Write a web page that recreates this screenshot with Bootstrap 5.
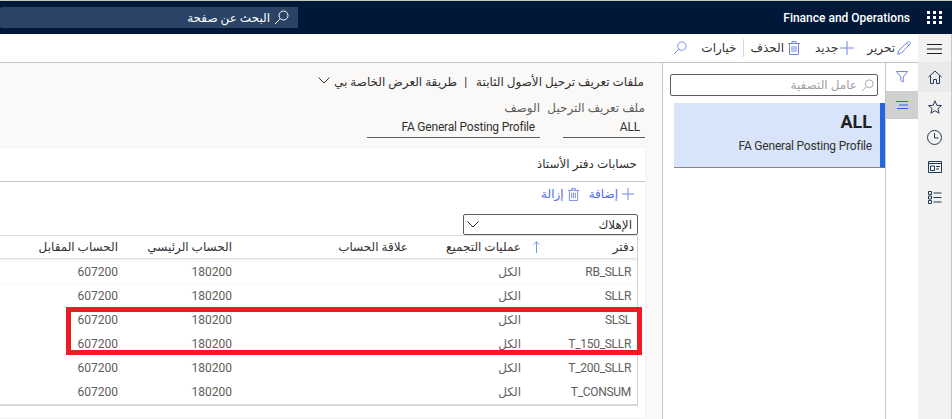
<!DOCTYPE html>
<html lang="ar" dir="rtl">
<head>
    <meta charset="UTF-8">
    <meta name="viewport" content="width=device-width, initial-scale=1.0">
    <title>Finance and Operations</title>
    <link href="https://cdn.jsdelivr.net/npm/bootstrap@5.3.0/dist/css/bootstrap.min.css" rel="stylesheet">
    <style>
        html, body { height: 419px; overflow: hidden; }
        body { font-family: Roboto, "DejaVu Sans", sans-serif; font-size: 12px; color: #323130; background: #faf9f8; }
        svg { display: block; flex: none; fill: none; stroke: currentColor; stroke-width: 1; }
        .top-line { height: 1px; background: #c8c6c4; }
        .top-bar { height: 33px; background: #011839; color: #fff; }
        .apps-btn { width: 34px; }
        .app-title { font-weight: 500; margin-right: 8px; }
        .page-search { width: 298px; height: 21px; background: #2b4367; border-radius: 2px 0 0 2px; margin-right: auto; padding-right: 9px; }
        .shell { height: 385px; }
        .rail { width: 34px; background: #f3f2f1; border-right: 1px solid #c8c6c4; color: #1f3a5c; }
        .rail-btn { height: 30px; }
        .rail-btn.first { height: 28px; padding-top: 2px; color: #201f1e; }
        .rail-btn.active { background: #ebeaea; }
        .content { min-width: 0; }
        .action-bar { height: 29px; background: #fff; border-bottom: 1px solid #c8c3be; padding-right: 7px; color: #323130; }
        .action-item { color: #323130; }
        .ic-blue { color: #6f86e8; }
        .act-edit { margin-left: 13px; gap: 2px; }
        .act-new { margin-left: 15px; gap: 2px; }
        .act-del { margin-left: 6px; }
        .act-sep { width: 1px; height: 18px; background: #dcdad8; margin-left: 7px; }
        .act-opts { margin-left: 14px; }
        .panes { height: 356px; }
        .nav-col { width: 33px; background: #fff; border-left: 1px solid #c8c6c4; }
        .nav-btn { height: 28px; }
        .nav-btn.on { background: #d2d0ce; color: #2266e3; }
        .list-pane { width: 223px; background: #fff; border-left: 1px solid #c8c6c4; padding-top: 11px; }
        .filter-box { height: 22px; margin: 0 7px 7px 7px; border: 1px solid #605e5c; border-radius: 2px; color: #a19f9d; padding-right: 3px; }
        .list-row { height: 65px; margin-left: 11px; margin-right: 0; background: #d8e4fa; border-right: 5px solid #2266e3; border-bottom: 1px solid #8a8886; padding: 7px 8px 0 0; }
        .list-head { font-size: 18px; font-weight: 700; line-height: 24px; color: #201f1e; }
        .list-sub { line-height: 16px; margin-top: 4px; direction: ltr; text-align: right; letter-spacing: -.2px; }
        .form-pane { min-width: 0; padding: 0 17px 0 0; }
        .crumbs { height: 36px; padding: 10px 1px 0 0; color: #323130; }
        .crumb-sep { margin: 0 9px 0 7px; }
        .head-fields { height: 49px; }
        .field-label { line-height: 18px; color: #605e5c; white-space: nowrap; }
        .field-value { border-bottom: 1px solid #605e5c; height: 21px; line-height: 21px; direction: ltr; text-align: right; padding: 0 5px; color: #323130; letter-spacing: -.2px; }
        .f1 { width: 82px; margin-left: 23px; }
        .f2 { width: 173px; }
        .ledger-card { height: 270px; background: #fff; border-radius: 2px 0 0 2px; width: 645px; box-shadow: 0 0 2px rgba(0,0,0,.08); position: relative; }
        .card-title { height: 34px; border-bottom: 1px solid #c8c6c4; padding: 8px 8px 0 0; line-height: 16px; }
        .card-actions { height: 24px; margin-bottom: 8px; padding-right: 11px; color: #4f6bed; }
        .act-add { margin-left: 10px; }
        .asset-select { width: 175px; height: 21px; margin-right: 7px; border: 1px solid #605e5c; border-radius: 2px; padding: 0 5px 0 3px; }
        .grid-wrap { width: 638px; margin-right: 7px; border-right: 1px solid #d2d0ce; border-bottom: 2px solid #dcdad8; border-top: 1px solid #e1dfdd; }
        .grid-wrap .table { margin: 0; table-layout: fixed; font-size: 12px; --bs-table-bg: transparent; --bs-table-color: #605e5c; }
        .grid-wrap th { height: 22px; padding: 0 5px 0 0; font-weight: 400; color: #323130; border-bottom: 1px solid #e1dfdd; vertical-align: middle; }
        .grid-wrap td { height: 24px; padding: 0 5px 0 0; vertical-align: middle; line-height: 16px; }
        .grid-wrap tbody tr:first-child td { height: 26px; padding-top: 2px; background-image: linear-gradient(#ebebeb, #fff 3px); }
        .grid-wrap th:first-child { padding-right: 3px; }
        .grid-wrap td:first-child { padding-right: 6px; direction: ltr; text-align: right; letter-spacing: -.3px; }
        .sort-up { color: #6f9fd8; margin-right: auto; margin-left: 7px; }
        .w1 { width: 111px; } .w2 { width: 113px; } .w3 { width: 176px; } .w4 { width: 114px; } .w5 { width: 123px; }
        .red-mark { position: absolute; top: 159px; left: 66px; width: 576px; height: 48px; border: 5px solid #ed1c24; }
    </style>
</head>
<body>
<div class="top-line"></div>
<div class="top-bar d-flex align-items-center">
    <div class="apps-btn d-flex justify-content-center">
        <svg width="16" height="14" viewBox="0 0 16 14"><g stroke="none" fill="#fff"><rect x="0" y="0" width="3" height="3"/><rect x="6" y="0" width="3" height="3"/><rect x="12" y="0" width="3" height="3"/><rect x="0" y="5" width="3" height="3"/><rect x="6" y="5" width="3" height="3"/><rect x="12" y="5" width="3" height="3"/><rect x="0" y="10" width="3" height="3"/><rect x="6" y="10" width="3" height="3"/><rect x="12" y="10" width="3" height="3"/></g></svg>
    </div>
    <div class="app-title"><bdi>Finance and Operations</bdi></div>
    <div class="page-search d-flex align-items-center gap-1">
        <svg width="15" height="15" viewBox="0 0 15 15"><circle cx="9.5" cy="5.5" r="4.5"/><path d="M6.2 8.8 1 14"/></svg>
        <span>البحث عن صفحة</span>
    </div>
</div>

<div class="shell d-flex">
    <div class="rail flex-shrink-0">
        <div class="rail-btn first d-flex align-items-center justify-content-center">
            <svg width="15" height="10" viewBox="0 0 15 10"><path d="M0 .5h15M0 5h15M0 9.5h15"/></svg>
        </div>
        <div class="rail-btn active d-flex align-items-center justify-content-center">
            <svg width="14" height="14" viewBox="0 0 14 14"><path d="M.5 7 7 1l6.5 6M2.5 5.5v8h3v-4h3v4h3v-8"/></svg>
        </div>
        <div class="rail-btn d-flex align-items-center justify-content-center">
            <svg width="14" height="14" viewBox="0 0 14 14"><path d="M7 .8 8.8 5.3l4.7.3-3.6 3 1.2 4.6L7 10.7l-4.1 2.5 1.2-4.6-3.6-3 4.7-.3z"/></svg>
        </div>
        <div class="rail-btn d-flex align-items-center justify-content-center">
            <svg width="15" height="15" viewBox="0 0 15 15"><circle cx="7.5" cy="7.5" r="7"/><path d="M7.5 3v5h4"/></svg>
        </div>
        <div class="rail-btn d-flex align-items-center justify-content-center">
            <svg width="14" height="12" viewBox="0 0 14 12"><path d="M.5.5h13v11H.5zM.5 2.5h13"/><path d="M2.5 5h4v4.5h-4zM8 5.5h4M8 8h3"/></svg>
        </div>
        <div class="rail-btn d-flex align-items-center justify-content-center">
            <svg width="14" height="13" viewBox="0 0 14 13"><path d="M.5.5h3v3h-3zM.5 5h3v3h-3zM.5 9.5h3v3h-3zM5.5 2h8M5.5 6.5h8M5.5 11h8"/></svg>
        </div>
    </div>

    <div class="content flex-grow-1 d-flex flex-column">
        <div class="action-bar d-flex align-items-center">
            <div class="action-item act-edit d-flex align-items-center">
                <svg class="ic-blue" width="14" height="14" viewBox="0 0 14 14"><path d="M.7 13.3 1.8 9.5 10.5 1c.8-.8 1.7-.8 2.4 0 .6.7.6 1.5-.1 2.2L4.5 12z"/><path d="M9.5 2l2.6 2.6"/></svg>
                <span>تحرير</span>
            </div>
            <div class="action-item act-new d-flex align-items-center">
                <svg class="ic-blue" width="14" height="14" viewBox="0 0 14 14"><path d="M7 0v14M0 7h14"/></svg>
                <span>جديد</span>
            </div>
            <div class="action-item act-del d-flex align-items-center gap-1">
                <svg class="ic-blue" width="12" height="14" viewBox="0 0 12 14"><path d="M0 2.5h12M4 2.5V.5h4v2M1.5 2.5v11h9v-11M4 5v6M6 5v6M8 5v6"/></svg>
                <span>الحذف</span>
            </div>
            <div class="act-sep"></div>
            <div class="action-item act-opts">خيارات</div>
            <svg class="ic-blue" width="14" height="14" viewBox="0 0 15 15"><circle cx="9.5" cy="5.5" r="4.5"/><path d="M6.2 8.8 1 14"/></svg>
        </div>

        <div class="panes d-flex">
            <div class="nav-col flex-shrink-0">
                <div class="nav-btn d-flex align-items-center justify-content-center ic-blue">
                    <svg width="12" height="12" viewBox="0 0 12 12"><path d="M.5.5h11L7.2 6v5L4.8 9.5V6z"/></svg>
                </div>
                <div class="nav-btn on d-flex align-items-center justify-content-center">
                    <svg width="12" height="8" viewBox="0 0 12 8"><path d="M0 .5h12M3 4h9M1 7.5h11"/></svg>
                </div>
            </div>

            <div class="list-pane flex-shrink-0">
                <div class="filter-box d-flex align-items-center gap-1">
                    <svg width="13" height="13" viewBox="0 0 15 15"><circle cx="9.5" cy="5.5" r="4.5"/><path d="M6.2 8.8 1 14"/></svg>
                    <span>عامل التصفية</span>
                </div>
                <div class="list-row">
                    <div class="list-head"><bdi>ALL</bdi></div>
                    <div class="list-sub">FA General Posting Profile</div>
                </div>
            </div>

            <div class="form-pane flex-grow-1">
                <div class="crumbs d-flex align-items-start">
                    <span>ملفات تعريف ترحيل الأصول الثابتة</span>
                    <span class="crumb-sep">|</span>
                    <span>طريقة العرض الخاصة بي</span>
                    <svg class="me-1 mt-1" width="12" height="7" viewBox="0 0 12 7"><path d="M.5.5 6 6l5.5-5.5"/></svg>
                </div>
                <div class="head-fields d-flex">
                    <div class="f1">
                        <div class="field-label">ملف تعريف الترحيل</div>
                        <div class="field-value">ALL</div>
                    </div>
                    <div class="f2">
                        <div class="field-label">الوصف</div>
                        <div class="field-value">FA General Posting Profile</div>
                    </div>
                </div>
                <div class="ledger-card">
                    <div class="card-title">حسابات دفتر الأستاذ</div>
                    <div class="card-actions d-flex align-items-center">
                        <div class="act-add d-flex align-items-center gap-1">
                            <svg class="ic-blue" width="12" height="12" viewBox="0 0 12 12"><path d="M6 0v12M0 6h12"/></svg>
                            <span>إضافة</span>
                        </div>
                        <div class="d-flex align-items-center gap-1">
                            <svg class="ic-blue" width="11" height="13" viewBox="0 0 12 14"><path d="M0 2.5h12M4 2.5V.5h4v2M1.5 2.5v11h9v-11M4 5v6M6 5v6M8 5v6"/></svg>
                            <span>إزالة</span>
                        </div>
                    </div>
                    <div class="asset-select d-flex align-items-center justify-content-between">
                        <span>الإهلاك</span>
                        <svg width="12" height="7" viewBox="0 0 12 7"><path d="M.5.5 6 6l5.5-5.5"/></svg>
                    </div>
                    <div class="grid-wrap">
                        <table class="table table-borderless">
                            <colgroup>
                                <col class="w1"><col class="w2"><col class="w3"><col class="w4"><col class="w5">
                            </colgroup>
                            <thead>
                            <tr>
                                <th><div class="d-flex align-items-center"><span>دفتر</span><svg class="sort-up" width="7" height="12" viewBox="0 0 7 12"><path d="M3.5 12V.7M.5 3.7l3-3 3 3"/></svg></div></th>
                                <th>عمليات التجميع</th>
                                <th>علاقة الحساب</th>
                                <th>الحساب الرئيسي</th>
                                <th>الحساب المقابل</th>
                            </tr>
                            </thead>
                            <tbody>
                            <tr><td>RB_SLLR</td><td>الكل</td><td></td><td>180200</td><td>607200</td></tr>
                            <tr><td>SLLR</td><td>الكل</td><td></td><td>180200</td><td>607200</td></tr>
                            <tr><td>SLSL</td><td>الكل</td><td></td><td>180200</td><td>607200</td></tr>
                            <tr><td>T_150_SLLR</td><td>الكل</td><td></td><td>180200</td><td>607200</td></tr>
                            <tr><td>T_200_SLLR</td><td>الكل</td><td></td><td>180200</td><td>607200</td></tr>
                            <tr><td>T_CONSUM</td><td>الكل</td><td></td><td>180200</td><td>607200</td></tr>
                            </tbody>
                        </table>
                    </div>
                    <div class="red-mark"></div>
                </div>
            </div>
        </div>
    </div>
</div>

<script src="https://cdn.jsdelivr.net/npm/bootstrap@5.3.0/dist/js/bootstrap.bundle.min.js"></script>
</body>
</html>
